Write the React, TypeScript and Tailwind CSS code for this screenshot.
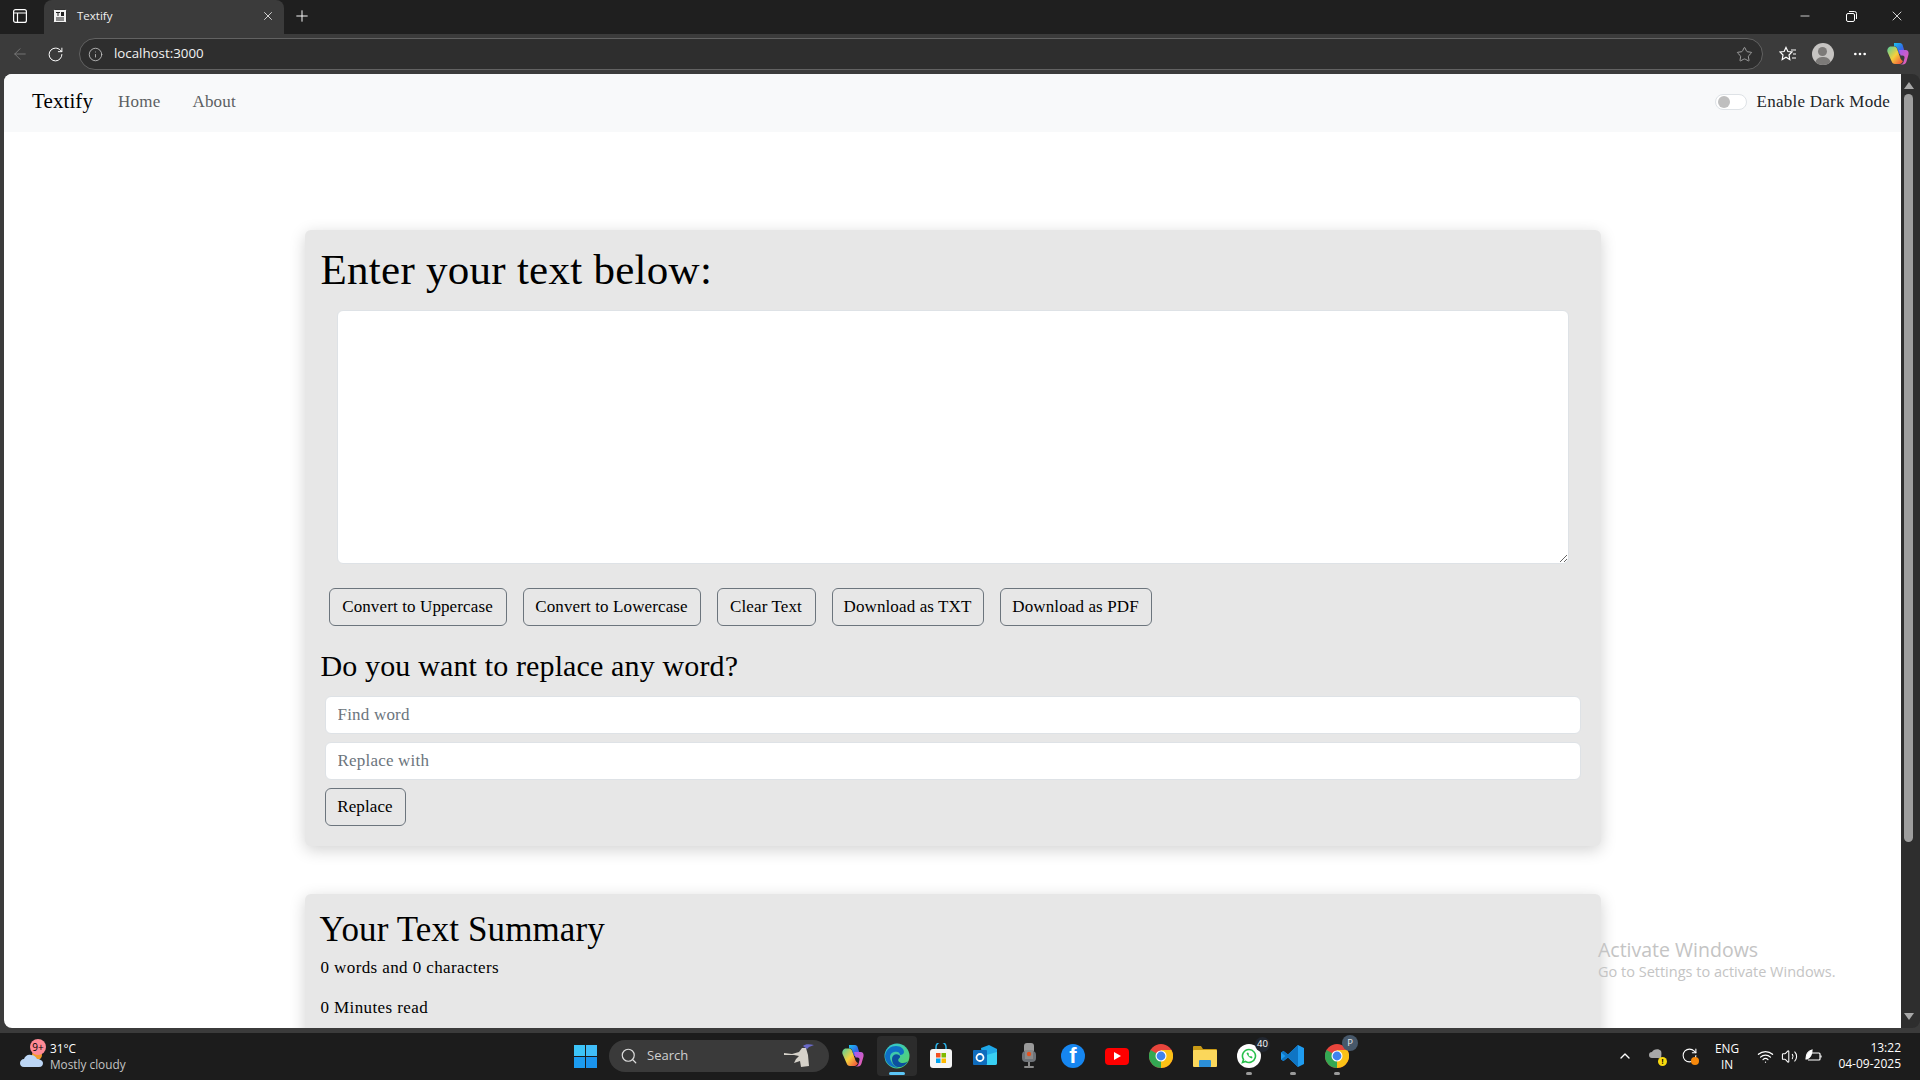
import { useState } from "react";
import { ArrowLeft, ChevronUp, Info, MoreHorizontal, Plus, RotateCw, Search, Star, Volume2, Wifi, X, Minus } from "lucide-react";

const serif = "font-['Georgia','Liberation_Serif',serif]";
const btn =
  "h-[38px] rounded-[6px] border border-[#6c757d] bg-transparent text-center text-[17px] text-black tracking-[0.12px] whitespace-nowrap";

function CopilotIcon({ size = 24 }: { size?: number }) {
  return (
    <svg width={size} height={size} viewBox="0 0 24 24">
      <defs>
        <linearGradient id="cpA" x1="0" y1="0" x2="1" y2="1">
          <stop offset="0" stopColor="#19c3f0" />
          <stop offset="0.55" stopColor="#2f6ee8" />
          <stop offset="1" stopColor="#7b3fe0" />
        </linearGradient>
        <linearGradient id="cpB" x1="0" y1="0" x2="1" y2="1">
          <stop offset="0" stopColor="#4fd0a0" />
          <stop offset="0.5" stopColor="#f6d03c" />
          <stop offset="1" stopColor="#f0433a" />
        </linearGradient>
        <linearGradient id="cpC" x1="0" y1="0" x2="1" y2="1">
          <stop offset="0" stopColor="#a25cf0" />
          <stop offset="1" stopColor="#ef5da8" />
        </linearGradient>
      </defs>
      <path d="M8 1h6c1.500 0 2.300 1 2.700 2.200L19 11l-6 1-2-6c-.5-1.200-1.500-1.600-3-1.500z" fill="url(#cpA)" />
      <path d="M13 8h6.500c2.500 0 3.500 2 3 4.500l-2 7c-.5 2-2 3-3.500 3h-3c2 0 3-1 3.500-2.500l1-4c.3-1.500-.5-2.500-2-2.500h-2z" fill="url(#cpC)" />
      <path d="M5 4.500h3c1.600 0 2.600 1 3 2.200L14 15c.5 2 1.500 3.500 3 4-1 2-2 3-3.500 3H9c-2 0-2.800-1-3.300-2.500L1.500 10C.8 7 2.500 4.500 5 4.500z" fill="url(#cpB)" />
    </svg>
  );
}

function EdgeIcon() {
  return (
    <svg width="26" height="26" viewBox="0 0 26 26">
      <defs>
        <linearGradient id="edA" x1="0" y1="0" x2="1" y2="1">
          <stop offset="0" stopColor="#2cc3de" />
          <stop offset="1" stopColor="#5bd55e" />
        </linearGradient>
      </defs>
      <circle cx="13" cy="13" r="12.500" fill="url(#edA)" />
      <path d="M1 13C2 6 7 3 12 3c5 0 8 3 8 6 0 2-2 3-4 3 0-3-3-4-6-3-4 1-5 5-3 9 1 3 4 6 8 7C7 25 1 20 1 13z" fill="#0f6fc5" />
      <path d="M8 16c0-4 4-6 7-4 2 1 1 3-.5 4-1 2 1 4 4.500 4 2 0 4-1 5-2-2 4-6 6.500-10 6-4-.5-6-4-6-8z" fill="#0c4f9e" />
    </svg>
  );
}

function ChromeIcon() {
  return (
    <svg width="24" height="24" viewBox="0 0 24 24">
      <circle cx="12" cy="12" r="12" fill="#e8453c" />
      <path d="M12 12 1.600 6A12 12 0 0 0 12 24l0 0z" fill="#34a853" />
      <path d="M12 6h10.400A12 12 0 0 1 12 24L12 12z" fill="#fbc116" />
      <circle cx="12" cy="12" r="5.500" fill="#fff" />
      <circle cx="12" cy="12" r="4.400" fill="#3f83ee" />
    </svg>
  );
}

function Taskbar() {
  const dot = "absolute bottom-[3px] h-[3px] w-[6px] rounded-full bg-[#9a9a9a]";
  return (
    <div className="flex h-[47px] items-center bg-[#1c1c1c] pb-[1px] text-white font-['Open_Sans',sans-serif]">
      <div className="flex w-[563px] items-center pl-[19px]">
        <div className="relative h-[30px] w-[32px]">
          <svg className="absolute left-0 top-[8px]" width="26" height="20" viewBox="0 0 26 20">
            <circle cx="18" cy="6" r="5" fill="#f39a2d" />
            <path d="M5 18c-3 0-4-2-4-4s2-4 4-4c1-3 4-5 7-4 3 0 5 2 6 4 3 0 6 2 6 4s-1 4-4 4z" fill="#bcd6f5" />
          </svg>
          <div className="absolute left-[11px] top-[-2px] flex h-[16px] w-[16px] items-center justify-center rounded-full bg-[#ff8a96] text-[10px] leading-none text-black">9+</div>
        </div>
        <div className="ml-[-1px] text-[11.800px] leading-[16px]">
          <div>31°C</div>
          <div className="text-[#c4c4c4]">Mostly cloudy</div>
        </div>
      </div>

      <div className="flex h-11 w-11 items-center justify-center">
        <svg width="23" height="23" viewBox="0 0 23 23">
          <rect x="0" y="0" width="11" height="11" fill="#3cc4f8" />
          <rect x="12" y="0" width="11" height="11" fill="#40bdf8" />
          <rect x="0" y="12" width="11" height="11" fill="#1c9cf0" />
          <rect x="12" y="12" width="11" height="11" fill="#1a94ee" />
        </svg>
      </div>
      <div className="ml-[2px] flex h-[32px] w-[220px] items-center rounded-full bg-[#3a3a3a] pl-[11px] pr-[14px]">
        <Search size={18} strokeWidth={1.600} className="text-[#dcdcdc]" />
        <span className="ml-[9px] text-[13px] text-[#d0d0d0]">Search</span>
        <svg className="ml-auto" width="32" height="26" viewBox="0 0 32 26">
          <path d="M1 10l8 1 7-2 3-4 4 0 2 7 1 11-8 1-1-6-6 2 2-4 3-3-5-1-10 0z" fill="#d6d2ca" />
          <path d="M20 3c2-2 6-2 11-1l-5 2-2 2z" fill="#6a6ac8" />
        </svg>
      </div>

      <div className="ml-[2px] flex">
        <div className="flex h-11 w-11 items-center justify-center"><CopilotIcon /></div>
        <div className="relative mx-[2px] flex h-[40px] w-[40px] items-center justify-center self-center rounded-[4px] bg-[#2c2c2c]">
          <EdgeIcon />
          <div className="absolute bottom-[1px] h-[3px] w-[16px] rounded-full bg-[#5cc5f5]" />
        </div>
        <div className="flex h-11 w-11 items-center justify-center">
          <svg width="24" height="26" viewBox="0 0 24 26">
            <path d="M7 6V4a5 5 0 0 1 10 0v2" fill="none" stroke="#2bb3e8" strokeWidth="1.500" />
            <rect x="1" y="6" width="22" height="19" rx="3" fill="#f5f5f5" />
            <rect x="7" y="10" width="4.500" height="4.500" fill="#f25022" />
            <rect x="12.500" y="10" width="4.500" height="4.500" fill="#7fba00" />
            <rect x="7" y="15.500" width="4.500" height="4.500" fill="#00a4ef" />
            <rect x="12.500" y="15.500" width="4.500" height="4.500" fill="#ffb900" />
          </svg>
        </div>
        <div className="flex h-11 w-11 items-center justify-center">
          <svg width="24" height="24" viewBox="0 0 24 24">
            <path d="M8 4l8-3 8 4v14a2 2 0 0 1-2 2H10z" fill="#1fa8e8" />
            <path d="M10 12l14-4v11a2 2 0 0 1-2 2H10z" fill="#39d0f4" />
            <rect x="0" y="6" width="14" height="15" rx="1" fill="#0f6cbd" />
            <circle cx="7" cy="13.500" r="3.500" fill="none" stroke="#fff" strokeWidth="1.800" />
          </svg>
        </div>
        <div className="flex h-11 w-11 items-center justify-center">
          <svg width="14" height="26" viewBox="0 0 14 26">
            <rect x="2" y="0" width="10" height="10" rx="3" fill="#9a9a9a" />
            <rect x="0" y="8" width="14" height="11" rx="4" fill="#6f7378" />
            <rect x="3" y="7" width="8" height="9" fill="#8a8a8a" />
            <circle cx="7" cy="11" r="2.200" fill="#e5521f" />
            <rect x="6" y="19" width="2" height="4" fill="#8a8a8a" />
            <rect x="2" y="23" width="10" height="2" rx="1" fill="#8a8a8a" />
          </svg>
        </div>
        <div className="flex h-11 w-11 items-center justify-center">
          <div className="flex h-[24px] w-[24px] items-end justify-center overflow-hidden rounded-full bg-[#1686f0] text-[22px] font-bold leading-[24px] text-white font-['Liberation_Sans',sans-serif]">f</div>
        </div>
        <div className="flex h-11 w-11 items-center justify-center">
          <div className="flex h-[17px] w-[24px] items-center justify-center rounded-[4px] bg-[#f00]">
            <div className="h-0 w-0 border-y-[4px] border-l-[7px] border-y-transparent border-l-white" />
          </div>
        </div>
        <div className="flex h-11 w-11 items-center justify-center"><ChromeIcon /></div>
        <div className="flex h-11 w-11 items-center justify-center">
          <svg width="24" height="22" viewBox="0 0 24 22">
            <path d="M0 2a1 1 0 0 1 1-1h7l2 3h13a1 1 0 0 1 1 1v3H0z" fill="#c99a15" />
            <rect x="0" y="5" width="24" height="17" rx="1" fill="#fbd75b" />
            <rect x="6" y="15" width="12" height="7" rx="1" fill="#2c90d8" />
          </svg>
        </div>
        <div className="relative flex h-11 w-11 items-center justify-center">
          <div className="flex h-[24px] w-[24px] items-center justify-center rounded-full bg-white">
            <svg width="16" height="16" viewBox="0 0 16 16">
              <path d="M8 1.500a6.500 6.500 0 0 0-5.500 10L1.500 14.500l3-1A6.500 6.500 0 1 0 8 1.500z" fill="none" stroke="#28c04c" strokeWidth="1.600" />
              <path d="M5.500 5c1 3 2.500 4.500 5.500 5.500l.5-1.500-1.500-1-1 .5c-.7-.4-1.200-1-1.500-1.500l.5-1-1-1.500z" fill="#28c04c" />
            </svg>
          </div>
          <div className="absolute right-[1px] top-[3px] flex h-[15px] w-[15px] items-center justify-center rounded-full bg-[#222730] text-[9.500px] text-white">40</div>
          <div className={dot} />
        </div>
        <div className="relative flex h-11 w-11 items-center justify-center">
          <svg width="24" height="24" viewBox="0 0 24 24">
            <path d="M17 1l6 3v16l-6 3-10-9.500L2.500 17 0 15.500v-7L2.500 7 7 10.500z" fill="#1f9cf0" />
            <path d="M17 7v10l-6-5z" fill="#1c1c1c" />
            <path d="M17 1 7 10.500 2.500 7 0 8.500 4.500 12 0 15.500 2.500 17 7 13.500 17 23z" fill="#0f75c4" />
          </svg>
          <div className={dot} />
        </div>
        <div className="relative flex h-11 w-11 items-center justify-center">
          <ChromeIcon />
          <div className="absolute right-[1px] top-[1px] flex h-[16px] w-[16px] items-center justify-center rounded-full bg-[#47586a] text-[9.500px] text-[#e8e8e8]">P</div>
          <div className={dot} />
        </div>
      </div>

      <div className="ml-auto flex items-center pr-[19px]">
        <ChevronUp size={16} strokeWidth={2} className="mr-[16px]" />
        <div className="relative mr-[16px] h-[16px] w-[16px]">
          <svg width="14" height="12" viewBox="0 0 14 12" className="absolute left-0 top-0"><path d="M3 10a3 3 0 0 1 0-6c1-3 7-4 9-1 1 2 0 7 0 7z" fill="#a8a8a8" /></svg>
          <div className="absolute bottom-[-2px] right-[-2px] flex h-[9px] w-[9px] items-center justify-center rounded-full bg-[#f8d90f] text-[7px] font-bold leading-none text-black">!</div>
        </div>
        <div className="relative mr-[12px] h-[18px] w-[18px]">
          <RotateCw size={17} strokeWidth={1.500} />
          <div className="absolute bottom-0 right-0 h-[8px] w-[8px] rounded-full bg-[#f7890c]" />
        </div>
        <div className="w-[32px] text-center text-[11.800px] leading-[16px]">
          <div>ENG</div>
          <div>IN</div>
        </div>
        <Wifi size={17} strokeWidth={1.800} className="ml-[14px]" />
        <Volume2 size={17} strokeWidth={1.500} className="ml-[7px]" />
        <svg className="ml-[7px]" width="17" height="14" viewBox="0 0 17 14" fill="none" stroke="#fff" strokeWidth="1.200">
          <path d="M6 4h8a1 1 0 0 1 1 1v5a1 1 0 0 1-1 1H3" />
          <path d="M16 6.500v2" />
          <path d="M1 10c0-4 2-8 6-9 0 4-1 7-5 9z" fill="#fff" />
        </svg>
        <div className="ml-[14px] w-[65px] text-right text-[12px] leading-[16px]">
          <div>13:22</div>
          <div>04-09-2025</div>
        </div>
      </div>
    </div>
  );
}

function BrowserChrome() {
  return (
    <>
      <div className="flex h-[34px] bg-[#1f1f1f] text-white font-['Open_Sans',sans-serif]">
        <div className="flex w-[44px] items-center justify-center pb-[2px] pr-[5px]">
          <svg width="14" height="14" viewBox="0 0 14 14" fill="none" stroke="#fff" strokeWidth="1.200">
            <rect x="0.600" y="0.600" width="12.800" height="12.800" rx="2" />
            <path d="M1 4h12M4.500 4v9" />
          </svg>
        </div>
        <div className="flex h-full w-[240px] items-center rounded-t-[8px] bg-[#3b3b3b] pb-[2px] pl-[9px] pr-[9px]">
          <svg width="14" height="14" viewBox="0 0 14 14">
            <rect x="0.500" y="0.500" width="13" height="13" rx="1" fill="#f2f2f2" stroke="#333" />
            <path d="M3 3h4v1H5.500v3h-1V4H3zM8 3h3v4H8zM3 8.500h8v1H3zM3 10.500h8v1H3z" fill="#222" />
          </svg>
          <span className="ml-[10px] text-[11.500px] text-[#f0f0f0]">Textify</span>
          <X size={14} strokeWidth={1.500} className="ml-auto text-[#e6e6e6]" />
        </div>
        <div className="flex w-[34px] items-center justify-center pb-[2px] pl-[1px]">
          <Plus size={18} strokeWidth={1.300} />
        </div>
        <div className="ml-auto flex items-center pb-[2px]">
          <div className="flex w-[46px] justify-center"><Minus size={14} strokeWidth={1.300} /></div>
          <div className="flex w-[46px] justify-center">
            <svg width="11" height="11" viewBox="0 0 11 11" fill="none" stroke="#fff">
              <rect x="0.500" y="2.500" width="8" height="8" rx="1.500" />
              <path d="M3 0.500h5.500a2 2 0 0 1 2 2V8" />
            </svg>
          </div>
          <div className="flex w-[46px] justify-center"><X size={16} strokeWidth={1.200} /></div>
        </div>
      </div>
      <div className="flex h-[40px] items-center bg-[#3b3b3b] text-white font-['Open_Sans',sans-serif]">
        <ArrowLeft size={18} strokeWidth={1.200} className="ml-[11px] text-[#7c7c7c]" />
        <RotateCw size={17} strokeWidth={1.400} className="ml-[18px]" />
        <div className="ml-[15px] flex h-[32px] w-[1684px] items-center rounded-full border border-[#626262] bg-[#2e2e2e] pl-[8px] pr-[9px]">
          <Info size={15} strokeWidth={1.300} className="text-[#c8c8c8]" />
          <span className="ml-[11px] text-[13.300px] text-[#f2f2f2]">localhost:3000</span>
          <Star size={17} strokeWidth={1.200} className="ml-auto text-[#b0b0b0]" />
        </div>
        <svg className="ml-[16px]" width="18" height="17" viewBox="0 0 18 17" fill="none" stroke="#fff" strokeWidth="1.200">
          <path d="M7 1.500l1.900 4 4.100.5-3 3 .8 4.500L7 11.300 3.200 13.500 4 9 1 6l4.100-.5z" />
          <path d="M12 4h5M14 8h3M13 12h4" />
        </svg>
        <div className="relative ml-[15px] h-[22px] w-[22px] overflow-hidden rounded-full bg-[#c6c4c2]">
          <div className="absolute left-[6px] top-[4px] h-[9px] w-[9px] rounded-full bg-[#7c7a78]" />
          <div className="absolute left-[3px] top-[14px] h-[14px] w-[16px] rounded-full bg-[#7c7a78]" />
        </div>
        <MoreHorizontal size={16} strokeWidth={2} className="ml-[18px]" />
        <div className="ml-[18px]"><CopilotIcon size={24} /></div>
      </div>
    </>
  );
}

function Switch() {
  const [on, setOn] = useState(false);
  return (
    <button
      type="button"
      onClick={() => setOn(!on)}
      className="flex h-[16px] w-[32px] items-center rounded-full border border-[#dee2e6] bg-white px-[2px]"
    >
      <span className={on ? "ml-auto h-[12px] w-[12px] rounded-full bg-[#bfbfbf]" : "h-[12px] w-[12px] rounded-full bg-[#bfbfbf]"} />
    </button>
  );
}

function Navbar() {
  return (
    <nav className="flex h-[58px] shrink-0 items-center bg-[#f8f9fa] pb-[2px] pl-[28px] pr-[11px]">
      <a className="text-[21px] text-black tracking-[0.1px]">Textify</a>
      <a className="ml-[25px] text-[17px] text-[#5c5f62] tracking-[0.2px]">Home</a>
      <a className="ml-[32px] text-[17px] text-[#5c5f62] tracking-[0.2px]">About</a>
      <div className="ml-auto flex items-center gap-[9px]">
        <Switch />
        <span className="text-[17px] text-[#212529] tracking-[0.26px]">Enable Dark Mode</span>
      </div>
    </nav>
  );
}

export default function App() {
  const [text, setText] = useState("");
  const words = text.trim() ? text.trim().split(/\s+/).length : 0;

  return (
    <div className={`flex h-screen flex-col overflow-hidden bg-[#3b3b3b] ${serif}`}>
      <BrowserChrome />
      <div className="flex h-[954px] shrink-0 pl-[4px]">
        <div className="relative flex min-w-0 flex-1 flex-col overflow-hidden rounded-tl-[8px] rounded-bl-[8px] bg-white">
          <Navbar />
          <main className="mx-auto mt-[98px] w-[1296px]">
            <section className="rounded-[6px] bg-[#e7e7e7] pb-[20px] pl-[16px] pr-[21px] pt-[14px] shadow-[0_4px_16px_rgba(0,0,0,0.18)]">
              <h1 className="text-[43px] leading-[52px] text-black tracking-[0.27px]">Enter your text below:</h1>
              <div className="ml-[16px] mt-[14px]">
                <textarea
                  value={text}
                  onChange={(e) => setText(e.target.value)}
                  className="block h-[254px] w-[1232px] rounded-[6px] border border-[#dee2e6] bg-white"
                />
              </div>
              <div className="ml-[8px] mt-[24px] flex gap-[16px]">
                <button className={`${btn} w-[178px]`}>Convert to Uppercase</button>
                <button className={`${btn} w-[178px]`}>Convert to Lowercase</button>
                <button className={`${btn} w-[99px]`}>Clear Text</button>
                <button className={`${btn} w-[152px]`}>Download as TXT</button>
                <button className={`${btn} w-[152px]`}>Download as PDF</button>
              </div>
              <h2 className="mt-[21px] text-[30px] leading-[38px] text-black tracking-[0.14px]">Do you want to replace any word?</h2>
              <div className="ml-[4px] mt-[11px] flex flex-col gap-[8px]">
                <input placeholder="Find word" className="h-[38px] w-[1256px] rounded-[6px] border border-[#dee2e6] bg-white px-[12px] text-[17px] tracking-[0.2px] placeholder:text-[#6c757d]" />
                <input placeholder="Replace with" className="h-[38px] w-[1256px] rounded-[6px] border border-[#dee2e6] bg-white px-[12px] text-[17px] tracking-[0.2px] placeholder:text-[#6c757d]" />
              </div>
              <button className={`${btn} ml-[4px] mt-[8px] block w-[81px]`}>Replace</button>
            </section>

            <section className="mt-[48px] rounded-[6px] bg-[#e7e7e7] pb-[24px] pl-[15px] pr-[16px] pt-[16px] shadow-[0_4px_16px_rgba(0,0,0,0.18)]">
              <h2 className="text-[35px] leading-[40px] text-black tracking-[0.14px]">Your Text Summary</h2>
              <p className="mt-[6px] pl-[1px] text-[17px] leading-[24px] text-black tracking-[0.4px]">{words} words and {text.length} characters</p>
              <p className="mt-[16px] pl-[1px] text-[17px] leading-[24px] text-black tracking-[0.4px]">{(0.008 * words).toFixed(0)} Minutes read</p>
            </section>
          </main>
          <div className="pointer-events-none absolute bottom-[46px] right-0 w-[303px] font-['Open_Sans',sans-serif] text-[#c4c4c4]">
            <div className="text-[19.500px] leading-[24px]">Activate Windows</div>
            <div className="text-[14.500px] leading-[20px]">Go to Settings to activate Windows.</div>
          </div>
        </div>
        <div className="flex w-[19px] shrink-0 flex-col items-center rounded-r-[8px] bg-[#2e2e2e] py-[8px] pr-[4px]">
          <div className="h-0 w-0 border-x-[5px] border-b-[7px] border-x-transparent border-b-[#a8a8a8]" />
          <div className="mt-[5px] h-[748px] w-[9px] rounded-full bg-[#9e9e9e]" />
          <div className="mt-auto h-0 w-0 border-x-[5px] border-t-[7px] border-x-transparent border-t-[#a8a8a8]" />
        </div>
      </div>
      <div className="h-[5px] shrink-0" />
      <Taskbar />
    </div>
  );
}
